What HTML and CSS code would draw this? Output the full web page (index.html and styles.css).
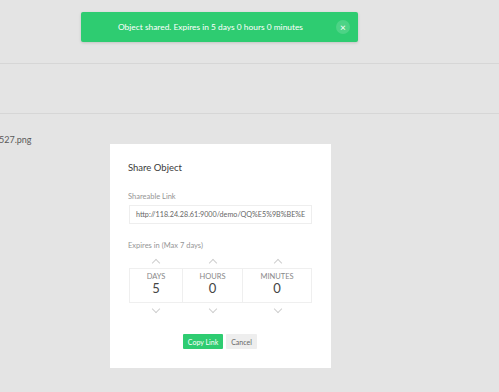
FILE: index.html
```html
<!DOCTYPE html>
<html lang="en">
<head>
    <meta charset="UTF-8">
    <meta name="viewport" content="width=device-width, initial-scale=1.0">
    <title>Share Object</title>
    <link rel="stylesheet" href="styles.css">
</head>
<body>
    <div class="page">
        <div class="top-bar"></div>
        <div class="toolbar"></div>
        <div class="file-row">527.png</div>
    </div>

    <div class="toast">
        <span class="toast-text">Object shared. Expires in 5 days 0 hours 0 minutes</span>
        <button class="toast-close">&times;</button>
    </div>

    <div class="modal">
        <h2 class="modal-title">Share Object</h2>
        <label class="field-label">Shareable Link</label>
        <div class="link-input">http://118.24.28.61:9000/demo/QQ%E5%9B%BE%E</div>
        <label class="field-label expires-label">Expires in (Max 7 days)</label>
        <div class="expiry">
            <div class="expiry-col">
                <span class="chevron up"></span>
                <div class="expiry-box first">
                    <span class="unit">DAYS</span>
                    <span class="value">5</span>
                </div>
                <span class="chevron down"></span>
            </div>
            <div class="expiry-col">
                <span class="chevron up"></span>
                <div class="expiry-box">
                    <span class="unit">HOURS</span>
                    <span class="value">0</span>
                </div>
                <span class="chevron down"></span>
            </div>
            <div class="expiry-col">
                <span class="chevron up"></span>
                <div class="expiry-box">
                    <span class="unit">MINUTES</span>
                    <span class="value">0</span>
                </div>
                <span class="chevron down"></span>
            </div>
        </div>
        <div class="modal-actions">
            <button class="btn btn-copy">Copy Link</button>
            <button class="btn btn-cancel">Cancel</button>
        </div>
    </div>
</body>
</html>
```

FILE: styles.css
```css
body {
    font-family: Lato, "Open Sans", sans-serif;
    margin: 0;
    padding: 0;
    background-color: #e4e4e4;
    width: 499px;
    height: 392px;
    overflow: hidden;
}
.top-bar {
    height: 63px;
    border-bottom: 1px solid #d6d6d6;
}
.toolbar {
    height: 49px;
    border-bottom: 1px solid #d6d6d6;
}
.file-row {
    padding-top: 20px;
    margin-left: -1px;
    font-size: 9px;
    color: #5a5a5a;
}
.toast {
    position: absolute;
    top: 12px;
    left: 81px;
    width: 277px;
    height: 30px;
    background: #2ecc71;
    border-radius: 2px;
    box-shadow: 0 1px 3px rgba(0, 0, 0, 0.15);
    display: flex;
    align-items: center;
    box-sizing: border-box;
    padding: 0 8px 0 37px;
}
.toast-text {
    flex: 1;
    color: white;
    font-size: 8.4px;
}
.toast-close {
    width: 14px;
    height: 14px;
    border-radius: 50%;
    border: none;
    padding: 0;
    background: rgba(255, 255, 255, 0.15);
    color: white;
    font-size: 10px;
    line-height: 14px;
    font-family: Lato, sans-serif;
}
.modal {
    position: absolute;
    top: 144px;
    left: 110px;
    width: 221px;
    height: 224px;
    background: white;
    box-sizing: border-box;
    padding: 17px 19px 0 18px;
}
.modal-title {
    margin: 0;
    font-size: 9.5px;
    font-weight: normal;
    color: #3a3a3a;
    line-height: 14px;
}
.field-label {
    display: block;
    font-size: 7.5px;
    color: #959595;
    line-height: 10px;
    margin-top: 17px;
}
.link-input {
    margin: 3px 0 0 1px;
    height: 19px;
    border: 1px solid #eeeeee;
    box-sizing: border-box;
    padding: 0 6px;
    font-size: 7.2px;
    line-height: 17px;
    color: #666;
    white-space: nowrap;
    overflow: hidden;
}
.expires-label {
    margin-top: 17px;
}
.expiry {
    display: grid;
    grid-template-columns: 54px 60px 69px;
    margin: 6px 0 0 1px;
}
.expiry-col {
    display: flex;
    flex-direction: column;
    align-items: center;
}
.chevron {
    width: 5px;
    height: 5px;
    border-left: 1px solid #cfcfcf;
    border-top: 1px solid #cfcfcf;
}
.chevron.up {
    transform: rotate(45deg);
    margin: 3px 0 2px;
}
.chevron.down {
    transform: rotate(225deg);
    margin: 3px 0 0;
}
.expiry-box {
    width: 100%;
    height: 35px;
    box-sizing: border-box;
    border: 1px solid #efefef;
    border-left: none;
    display: flex;
    flex-direction: column;
    align-items: center;
    padding-top: 3px;
}
.expiry-box.first {
    border-left: 1px solid #efefef;
}
.unit {
    font-size: 7.5px;
    color: #888;
    line-height: 9px;
}
.value {
    font-size: 13px;
    color: #444;
    line-height: 14px;
}
.modal-actions {
    display: flex;
    justify-content: center;
    gap: 3px;
    margin-top: 22px;
}
.btn {
    height: 15px;
    border: none;
    border-radius: 1px;
    font-family: Lato, sans-serif;
    font-size: 7px;
    padding: 0;
    white-space: nowrap;
    cursor: pointer;
}
.btn-copy {
    background: #2ecc71;
    color: white;
    width: 40px;
}
.btn-cancel {
    background: #eeeeee;
    color: #666;
    width: 31px;
}
```
